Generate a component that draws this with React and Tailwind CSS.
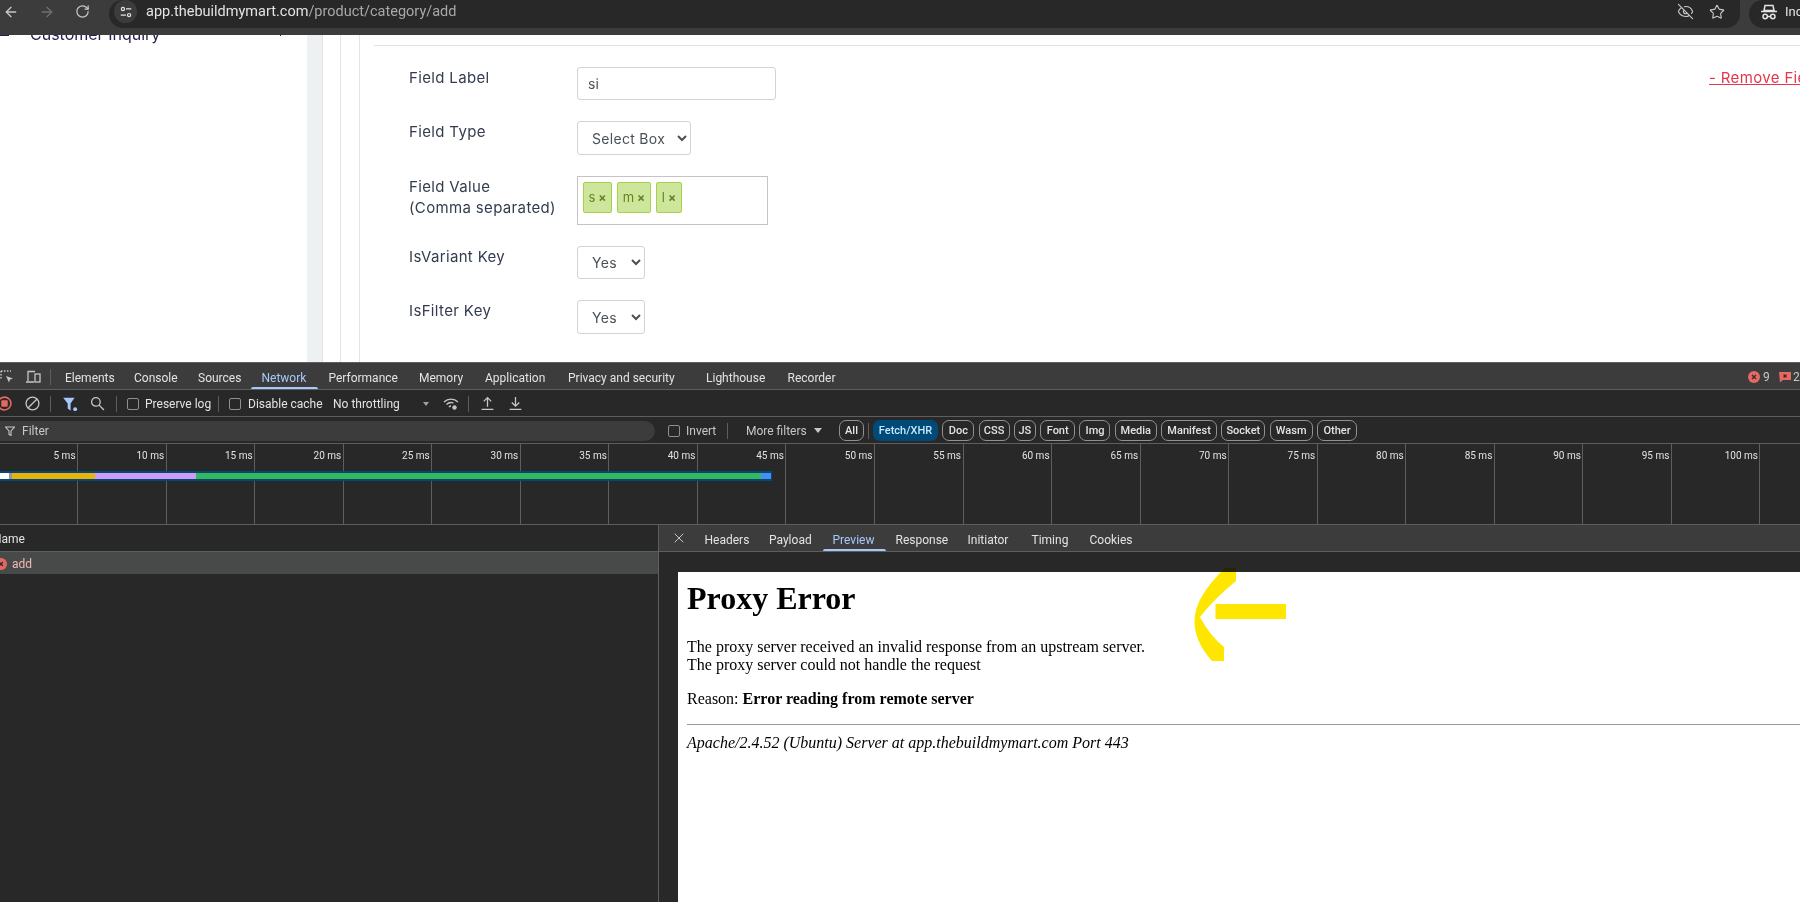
import { ArrowLeft, ArrowRight, RotateCw, EyeOff, Star, X } from 'lucide-react'

const MAIN_TABS = [
  { name: 'Elements', width: 'w-[69px]' },
  { name: 'Console', width: 'w-[64px]' },
  { name: 'Sources', width: 'w-[63.5px]' },
  { name: 'Network', width: 'w-[67px]', active: true },
  { name: 'Performance', width: 'w-[90.5px]' },
  { name: 'Memory', width: 'w-[66px]' },
  { name: 'Application', width: 'w-[83px]' },
  { name: 'Privacy and security', width: 'w-[138px]' },
  { name: 'Lighthouse', width: 'w-[81.5px]' },
  { name: 'Recorder', width: 'w-[70px]' },
]

const CHIPS = [
  { name: 'Fetch/XHR', width: 'w-[65px]', active: true },
  { name: 'Doc', width: 'w-[32px]' },
  { name: 'CSS', width: 'w-[31px]' },
  { name: 'JS', width: 'w-[22px]' },
  { name: 'Font', width: 'w-[35px]' },
  { name: 'Img', width: 'w-[31px]' },
  { name: 'Media', width: 'w-[42px]' },
  { name: 'Manifest', width: 'w-[56px]' },
  { name: 'Socket', width: 'w-[44px]' },
  { name: 'Wasm', width: 'w-[43px]' },
  { name: 'Other', width: 'w-[40px]' },
]

const DETAIL_TABS = [
  { name: 'Headers', width: 'w-[64.5px]' },
  { name: 'Payload', width: 'w-[63.5px]' },
  { name: 'Preview', width: 'w-[63px]', active: true },
  { name: 'Response', width: 'w-[72px]' },
  { name: 'Initiator', width: 'w-[64px]' },
  { name: 'Timing', width: 'w-[58px]' },
  { name: 'Cookies', width: 'w-[70px]' },
]

const TICKS = Array.from({ length: 21 }, (_, i) => (i + 1) * 5)

const Sep = ({ className = '' }) => <span className={`h-[16px] w-px bg-[#5e5e5e] ${className}`} />

const Check = ({ className = '' }) => (
  <span className={`h-[12px] w-[12px] shrink-0 rounded-[2px] border border-[#8e918f] ${className}`} />
)

const ErrorDot = ({ className = '' }) => (
  <svg viewBox="0 0 12 12" className={`h-[12px] w-[12px] shrink-0 ${className}`}>
    <circle cx="6" cy="6" r="6" fill="#e46962" />
    <path d="M4 4l4 4M8 4l-4 4" stroke="#3a2a2a" strokeWidth="1.3" />
  </svg>
)

const Field = ({ label, children }) => (
  <div className="flex items-start">
    <div className="w-[168px] shrink-0 text-[15px] leading-[21px] tracking-[0.35px] text-[#333c4e]">{label}</div>
    {children}
  </div>
)

const NativeSelect = ({ value, className }) => (
  <select
    defaultValue={value}
    className={`rounded-[3px] border border-[#ced4da] bg-white pl-[10px] text-[14px] tracking-[0.3px] text-[#495057] ${className}`}
  >
    <option>{value}</option>
  </select>
)

const Tag = ({ text, className }) => (
  <span className={`flex h-[31px] items-center justify-center gap-[3px] rounded-[2px] border border-[#a5d24a] bg-[#cde69c] text-[13px] text-[#638421] ${className}`}>
    <span>{text}</span>
    <span className="text-[12px] font-bold">×</span>
  </span>
)

const BrowserBar = () => (
  <div className="flex h-[35px] shrink-0 items-start bg-[#3c3c3c] font-['Roboto',sans-serif] text-[#c7c7c7]">
    <div className="flex h-[23px] w-[109px] shrink-0 items-center">
      <ArrowLeft className="ml-[3px] h-[16px] w-[16px]" strokeWidth={2} />
      <ArrowRight className="ml-[20px] h-[16px] w-[16px] text-[#6f6f6f]" strokeWidth={2} />
      <RotateCw className="ml-[20px] h-[15px] w-[15px]" strokeWidth={2} />
    </div>
    <div className="flex h-[28px] w-[1631px] shrink-0 items-start rounded-br-[14px] rounded-l-[14px] bg-[#282828]">
      <span className="ml-[5px] flex h-[23px] w-[23px] items-center justify-center rounded-full bg-[#3c3c3c]">
        <svg viewBox="0 0 16 16" className="h-[14px] w-[14px]" fill="none" stroke="#e3e3e3" strokeWidth="1.4">
          <circle cx="4.5" cy="4.5" r="1.8" />
          <path d="M8 4.5h6M2 11.5h6" />
          <circle cx="11.5" cy="11.5" r="1.8" />
        </svg>
      </span>
      <span className="ml-[9px] flex h-[23px] items-center text-[14.5px] text-[#e3e3e3]">
        app.thebuildmymart.com<span className="text-[#a9a9a9]">/product/category/add</span>
      </span>
      <div className="ml-auto flex h-[23px] items-center">
        <EyeOff className="h-[17px] w-[17px]" strokeWidth={1.6} />
        <Star className="ml-[15px] mr-[15px] h-[16px] w-[16px]" strokeWidth={1.7} />
      </div>
    </div>
    <div className="ml-[9px] flex h-[28px] flex-1 items-start overflow-hidden rounded-l-[14px] bg-[#282828]">
      <span className="flex h-[23px] items-center whitespace-nowrap pl-[11px] text-[13px] text-[#e3e3e3]">
        <svg viewBox="0 0 18 18" className="mr-[7px] h-[18px] w-[18px]" fill="none" stroke="#e3e3e3" strokeWidth="1.5">
          <path d="M5 2.5h8l1 5H4z" />
          <path d="M1 8.5h16" />
          <circle cx="5.2" cy="13.5" r="2.2" />
          <circle cx="12.8" cy="13.5" r="2.2" />
          <path d="M7.4 13.5h3.2" />
        </svg>
        Incognito
      </span>
    </div>
  </div>
)

const PageArea = () => (
  <div className="flex h-[327px] shrink-0 overflow-hidden bg-white font-['Inter',sans-serif]">
    <div className="flex w-[307px] shrink-0 items-start">
      <span className="h-[1px] w-[9px] bg-[#2a1b4d]" />
      <div className="-mt-[11px] ml-[21px] flex h-[20px] items-center whitespace-nowrap text-[16px] text-[#2a1b4d]">Customer Inquiry</div>
      <span className="ml-auto mr-[26px] h-[1px] w-[1px] bg-[#2a1b4d]" />
    </div>
    <div className="w-[16px] shrink-0 border-r border-[#dfe3e3] bg-[#eef1f1]" />
    <div className="w-[18px] shrink-0 border-r border-[#e2e5e8]" />
    <div className="w-[19px] shrink-0 border-r border-[#e2e5e8]" />
    <div className="min-w-0 flex-1 pl-[14px]">
      <div className="mt-[10px] h-px bg-[#e2e2e2]" />
      <div className="ml-[35px] mt-[21px] flex flex-col gap-[21px]">
        <div className="flex items-start whitespace-nowrap">
          <Field label="Field Label">
            <input
              readOnly
              value="si"
              className="h-[33px] w-[199px] rounded-[3px] border border-[#ced4da] px-[10px] text-[14px] text-[#495057]"
            />
          </Field>
          <a className="ml-[933px] text-[15px] leading-[21px] tracking-[0.35px] text-[#e8364f] underline">- Remove Field</a>
        </div>
        <Field label="Field Type">
          <NativeSelect value="Select Box" className="h-[34px] w-[114px]" />
        </Field>
        <Field label={<>Field Value<br />(Comma separated)</>}>
          <div className="flex h-[49px] w-[191px] gap-[5px] border border-[#c4c4c4] pl-[5px] pt-[5px]">
            <Tag text="s" className="w-[29px]" />
            <Tag text="m" className="w-[34px]" />
            <Tag text="l" className="w-[26px]" />
          </div>
        </Field>
        <Field label="IsVariant Key">
          <NativeSelect value="Yes" className="h-[33px] w-[68px]" />
        </Field>
        <Field label="IsFilter Key">
          <NativeSelect value="Yes" className="h-[34px] w-[68px]" />
        </Field>
      </div>
    </div>
  </div>
)

const MainTabs = () => (
  <div className="flex h-[27px] shrink-0 border-b border-[#5e5e5e] bg-[#3c3c3c]">
    <div className="flex w-[51px] shrink-0 items-center pt-[2px]">
      <svg viewBox="0 0 16 16" className="-ml-[1px] h-[16px] w-[16px]" fill="none" stroke="#c7c7c7" strokeWidth="1.4">
        <path d="M2 2h10M2 2v9" strokeDasharray="1.5 1.5" />
        <path d="M7 7l7 2.5-3 1-1 3z" fill="#c7c7c7" stroke="none" />
      </svg>
      <svg viewBox="0 0 16 16" className="ml-[10px] h-[16px] w-[16px]" fill="none" stroke="#c7c7c7" strokeWidth="1.3">
        <path d="M3 12V2.5h7M1 13h8" />
        <rect x="10" y="5" width="5" height="8" />
      </svg>
      <Sep className="ml-auto" />
    </div>
    <div className="ml-[3.5px] flex">
      {MAIN_TABS.map((tab) => (
        <div
          key={tab.name}
          className={`relative flex items-center whitespace-nowrap pl-[10.5px] pt-[3px] text-[12px] ${tab.width} ${tab.active ? 'text-[#a8c7fa]' : 'text-[#e3e3e3]'}`}
        >
          {tab.name}
          {tab.active && <span className="absolute inset-x-0 bottom-0 h-[2px] rounded-t-[2px] bg-[#a8c7fa]" />}
        </div>
      ))}
    </div>
    <div className="ml-auto flex items-center whitespace-nowrap pt-[2px] text-[12px] text-[#c7c7c7]">
      <ErrorDot />
      <span className="ml-[3px] w-[16px]">9</span>
      <svg viewBox="0 0 12 12" className="h-[12px] w-[12px] shrink-0">
        <path d="M0 1h12v8H4l-3 2.5z" fill="#e46962" />
        <rect x="4.5" y="3.5" width="3" height="3" fill="#3a2a2a" />
      </svg>
      <span className="ml-[2px] w-[7px]">2</span>
    </div>
  </div>
)

const NetworkToolbar = () => (
  <div className="flex h-[27px] shrink-0 items-center border-b border-[#5e5e5e] pt-[1px] text-[12px] text-[#e3e3e3]">
    <svg viewBox="0 0 14 14" className="-ml-[3px] h-[15px] w-[15px] shrink-0">
      <circle cx="7" cy="7" r="6" fill="none" stroke="#e46962" strokeWidth="1.5" />
      <rect x="4" y="4" width="6" height="6" rx="1" fill="#e46962" />
    </svg>
    <svg viewBox="0 0 14 14" className="ml-[13px] h-[15px] w-[15px] shrink-0" fill="none" stroke="#c7c7c7" strokeWidth="1.2">
      <circle cx="7" cy="7" r="6" />
      <path d="M3 11l8-8" />
    </svg>
    <Sep className="ml-[10px]" />
    <svg viewBox="0 0 14 14" className="ml-[11px] h-[16px] w-[16px] shrink-0">
      <path d="M1 1.5h10L7.5 6.5V13L5 11V6.500z" fill="#a8c7fa" />
      <circle cx="11.5" cy="11.500" r="1.7" fill="#a8c7fa" />
    </svg>
    <svg viewBox="0 0 14 14" className="ml-[12px] h-[15px] w-[15px] shrink-0" fill="none" stroke="#c7c7c7" strokeWidth="1.2">
      <circle cx="5.500" cy="5.500" r="4" />
      <path d="M8.500 8.500l4.500 4.500" />
    </svg>
    <Sep className="ml-[11px]" />
    <Check className="ml-[10px]" />
    <span className="ml-[6px] w-[73px] whitespace-nowrap">Preserve log</span>
    <Sep />
    <Check className="ml-[10px]" />
    <span className="ml-[7px] w-[85px] whitespace-nowrap">Disable cache</span>
    <span className="w-[90px] whitespace-nowrap">No throttling</span>
    <span className="h-0 w-0 border-x-[3.5px] border-t-[4px] border-x-transparent border-t-[#a0a0a0]" />
    <svg viewBox="0 0 16 16" className="ml-[14px] h-[16px] w-[16px] shrink-0" fill="none" stroke="#c7c7c7" strokeWidth="1.3">
      <path d="M1 6a10 10 0 0 1 14 0M3.500 8.500a6.500 6.500 0 0 1 7-1.500M6 11a3 3 0 0 1 2-1" />
      <circle cx="11.500" cy="11.500" r="2.200" fill="#c7c7c7" stroke="none" />
    </svg>
    <Sep className="ml-[9px]" />
    <svg viewBox="0 0 14 14" className="ml-[11px] h-[15px] w-[15px] shrink-0" fill="none" stroke="#c7c7c7" strokeWidth="1.2">
      <path d="M7 10V1.500M3.500 5L7 1.500 10.500 5M1.500 12.500h11" />
    </svg>
    <svg viewBox="0 0 14 14" className="ml-[13px] h-[15px] w-[15px] shrink-0" fill="none" stroke="#c7c7c7" strokeWidth="1.2">
      <path d="M7 1v8.500M3.500 6L7 9.500 10.500 6M1.500 12.500h11" />
    </svg>
  </div>
)

const FilterBar = () => (
  <div className="flex h-[27px] shrink-0 items-center border-b border-[#5e5e5e] pt-[1px] text-[12px] text-[#e3e3e3]">
    <div className="flex h-[20px] w-[655px] shrink-0 items-center rounded-r-[10px] bg-[#3c3c3c] pl-[5px] text-[#c7c7c7]">
      <svg viewBox="0 0 10 10" className="h-[10px] w-[10px]" fill="none" stroke="#c7c7c7" strokeWidth="1.100">
        <path d="M.5 1h9L6 5v4.500L4 8.500V5z" />
      </svg>
      <span className="ml-[7px]">Filter</span>
    </div>
    <Check className="ml-[13px]" />
    <span className="ml-[6px] w-[41px] whitespace-nowrap text-[#c7c7c7]">Invert</span>
    <Sep />
    <span className="ml-[18px] w-[68px] whitespace-nowrap text-[#c7c7c7]">More filters</span>
    <span className="h-0 w-0 border-x-[4px] border-t-[5px] border-x-transparent border-t-[#c7c7c7]" />
    <span className="ml-[17px] flex h-[21px] w-[25px] items-center justify-center rounded-[7px] border border-[#8e918f] pt-[1px] text-[11px] font-medium">All</span>
    <Sep className="mx-[4px]" />
    <div className="flex gap-[4.3px]">
      {CHIPS.map((chip) => (
        <span
          key={chip.name}
          className={`flex h-[21px] items-center justify-center rounded-[7px] pt-[1px] text-[11px] font-medium ${chip.width} ${chip.active ? 'bg-[#004a77] text-[#c2e7ff]' : 'border border-[#8e918f] text-[#e3e3e3]'}`}
        >
          {chip.name}
        </span>
      ))}
    </div>
  </div>
)

const Timeline = () => (
  <div className="relative h-[81px] shrink-0 overflow-hidden border-b border-[#5e5e5e]">
    <div className="-ml-[10.5px] flex h-full">
      {TICKS.map((tick) => (
        <div
          key={tick}
          className="h-full w-[88.55px] shrink-0 border-r border-[#5e5e5e] pr-[1.5px] pt-[5px] text-right text-[10px] leading-[14px] text-[#e3e3e3]"
        >
          {tick} ms
        </div>
      ))}
    </div>
    <div className="absolute left-0 top-[27px] flex h-[10px] w-[772px] bg-[#004a77] py-[2px] pr-px">
      <span className="w-[9px] bg-white" />
      <span className="w-[3px] bg-[#9a9a9a]" />
      <span className="w-[83px] bg-[#e8b30c]" />
      <span className="w-[101px] bg-[#cf9bf5]" />
      <span className="w-[565px] bg-[#36b85d]" />
      <span className="w-[10px] bg-[#4a8cf0]" />
    </div>
  </div>
)

const RequestList = () => (
  <div className="w-[659px] shrink-0 border-r border-[#5e5e5e] text-[12px]">
    <div className="flex h-[27px] items-center border-b border-[#5e5e5e] bg-[#282828] pt-[1px] text-[#e3e3e3]">
      <span className="-ml-[7px]">Name</span>
    </div>
    <div className="flex h-[22px] items-center bg-[#484a49] pt-[1px] text-[#f2b8b5]">
      <ErrorDot className="-ml-[5px]" />
      <span className="ml-[5px]">add</span>
    </div>
  </div>
)

const ProxyPreview = () => (
  <div className="ml-[19px] mt-[20px] h-[330px] overflow-hidden bg-white pl-[9px] font-['Liberation_Serif',serif] text-[16px] leading-[18px] text-black">
    <h1 className="mt-[8px] text-[32px] font-bold leading-[37px]">Proxy Error</h1>
    <p className="mt-[21px]">
      The proxy server received an invalid response from an upstream server.
      <br />
      The proxy server could not handle the request
    </p>
    <p className="mt-[16px]">
      Reason: <strong className="font-bold">Error reading from remote server</strong>
    </p>
    <hr className="mt-[16px] border-0 border-t border-t-[#9a9a9a]" />
    <p className="mt-[9px] italic">Apache/2.4.52 (Ubuntu) Server at app.thebuildmymart.com Port 443</p>
  </div>
)

const DetailPane = () => (
  <div className="min-w-0 flex-1">
    <div className="flex h-[27px] items-stretch border-b border-[#5e5e5e] bg-[#3c3c3c] text-[12px] text-[#e3e3e3]">
      <X className="ml-[12px] mr-[7.5px] h-[16px] w-[16px] self-center text-[#c7c7c7]" strokeWidth={1.500} />
      {DETAIL_TABS.map((tab) => (
        <div
          key={tab.name}
          className={`relative flex items-center pl-[10px] pt-[3px] ${tab.width} ${tab.active ? 'text-[#a8c7fa]' : ''}`}
        >
          {tab.name}
          {tab.active && <span className="absolute inset-x-0 bottom-0 h-[2px] rounded-t-[2px] bg-[#a8c7fa]" />}
        </div>
      ))}
    </div>
    <ProxyPreview />
  </div>
)

const App = () => (
  <div className="relative flex h-[902px] w-[1800px] flex-col overflow-hidden bg-[#282828]">
    <BrowserBar />
    <PageArea />
    <div className="flex min-h-0 flex-1 flex-col border-t border-[#5e5e5e] font-['Roboto',sans-serif]">
      <MainTabs />
      <NetworkToolbar />
      <FilterBar />
      <Timeline />
      <div className="flex min-h-0 flex-1">
        <RequestList />
        <DetailPane />
      </div>
    </div>
    {/* yellow arrow someone drew on the screenshot, multiply so it goes dark over the panel */}
    <svg viewBox="0 0 100 100" className="absolute left-[1190px] top-[565px] h-[100px] w-[100px] mix-blend-multiply" fill="#ffe600">
      <path d="M35 3h11v13Q24 34 10 52Q20 71 34 82v14H22Q4 76 4.500 55Q5 32 35 3z" />
      <rect x="25.500" y="39" width="70.500" height="15" />
    </svg>
  </div>
)

export default App
